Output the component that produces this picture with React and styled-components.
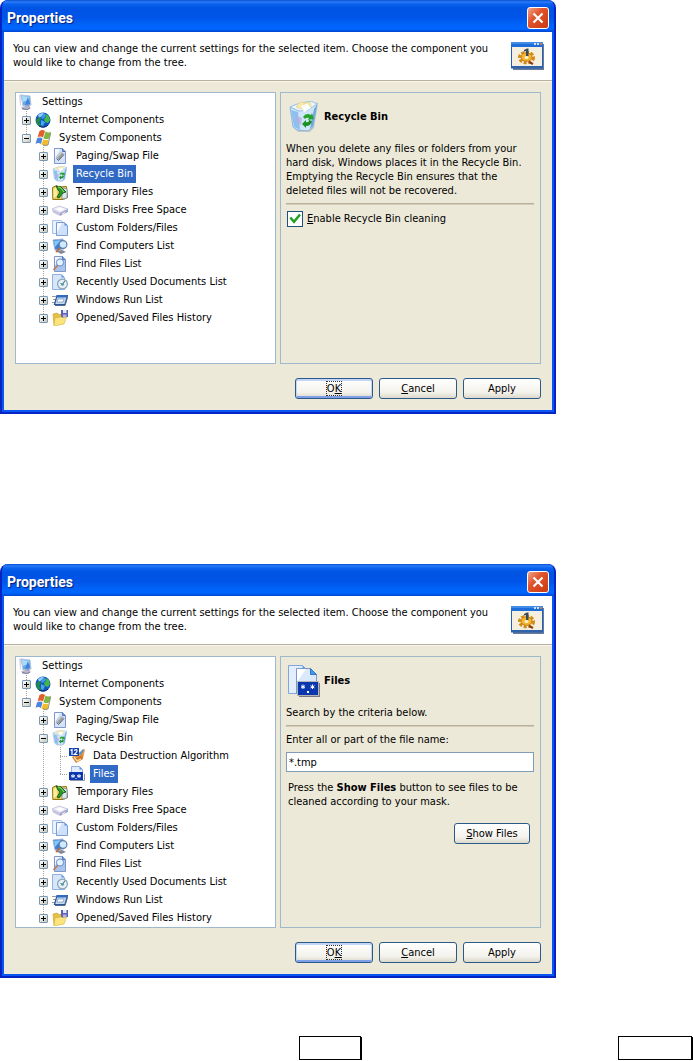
import React, { useState } from "react";
import styled, { createGlobalStyle } from "styled-components";

const GlobalStyle = createGlobalStyle`
  *, *::before, *::after { box-sizing: border-box; }
  body {
    margin: 0;
    background: #fff;
    color: #000;
    font: 11px/14px "DejaVu Sans Condensed", "DejaVu Sans", Tahoma, sans-serif;
  }
  button, input { font: inherit; color: inherit; margin: 0; }
  p, h1, h2, ul { margin: 0; padding: 0; }
  svg { display: block; flex-shrink: 0; }
`;

const Page = styled.main`
  display: flex;
  flex-direction: column;
  align-items: flex-start;
  gap: 150px;
`;

const Dialog = styled.section`
  width: 100%;
  max-width: 556px;
  padding: 0 2px 2px;
  border: 2px solid #0524c4;
  border-top: 0;
  border-radius: 8px 8px 0 0;
  background: #0b56f2;
  overflow: hidden;
`;

const Body = styled.div`
  background: #ece9d8;
`;

const TitleBar = styled.header`
  display: flex;
  align-items: center;
  justify-content: space-between;
  height: 32px;
  margin: 0 -2px;
  padding: 4px 5px 0;
  background: linear-gradient(
    #0a4fd0 0, #2a7cf8 2px, #0a62ee 4px, #0054e3 8px,
    #0055e8 18px, #0064fa 25px, #0066ff 29px, #0050e0 31px, #0044d0 32px
  );
`;

const Title = styled.h1`
  color: #fff;
  font: bold 14px/18px Roboto, "Open Sans", sans-serif;
  text-shadow: 1px 1px 1px #0a1f7a;
`;

const CloseButton = styled.button`
  display: grid;
  place-items: center;
  width: 22px;
  height: 22px;
  padding: 0;
  border: 1px solid #fff;
  border-radius: 3px;
  background: linear-gradient(135deg, #f0a58c, #e0532b 40%, #c93a12);
`;

const Intro = styled.div`
  display: flex;
  align-items: center;
  justify-content: space-between;
  gap: 12px;
  min-height: 48px;
  padding: 0 8px 0 9px;
  background: #fff;
`;

const Rule = styled.hr`
  height: 2px;
  margin: ${(p) => p.$space || "0"};
  border: 0;
  border-top: 1px solid #b8b09c;
  border-bottom: 1px solid ${(p) => (p.$space ? "#d2ccb9" : "#f8f6ee")};
`;

const Columns = styled.div`
  display: grid;
  grid-template-columns: 1fr 1fr;
  gap: 4px;
  padding: 10px 11px 0;
`;

const Box = styled.div`
  min-width: 0;
  min-height: 272px;
  border: 1px solid #9fb8ca;
`;

const TreeBox = styled(Box)`
  background: #fff;
  line-height: 18px;
`;

const Panel = styled(Box)`
  padding: 8px 6px 8px 5px;
`;

const dots = "#a5a293";

const Level = styled.ul`
  list-style: none;
  padding-left: ${(p) => (p.$nested ? "17px" : "0")};
`;

const Item = styled.li`
  background: repeating-linear-gradient(${dots} 0 1px, transparent 1px 2px)
    10px 0 / 1px ${(p) => (p.$last ? "9px" : "100%")} no-repeat;
`;

const Row = styled.div`
  display: flex;
  align-items: center;
  height: 18px;
  padding-left: ${(p) => (p.$root ? "2px" : "6px")};
  white-space: nowrap;
`;

const Toggle = styled.button`
  display: block;
  width: 9px;
  height: 9px;
  margin-right: 4px;
  padding: 0;
  border: 1px solid #7898b5;
  border-radius: 1px;
  background:
    linear-gradient(#000, #000) center / 5px 1px no-repeat,
    linear-gradient(#000, #000) center / 1px ${(p) => (p.$open ? "1px" : "5px")} no-repeat,
    linear-gradient(135deg, #fff, #cbc6b8);
`;

const Stub = styled.span`
  width: 13px;
  height: 18px;
  background: repeating-linear-gradient(90deg, ${dots} 0 1px, transparent 1px 2px)
    4px 9px / 7px 1px no-repeat;
`;

const Label = styled.span`
  margin-left: 5px;
  padding: 0 3px;
  color: ${(p) => (p.$selected ? "#fff" : "#000")};
  background: ${(p) => (p.$selected ? "#316ac5" : "transparent")};
`;

const Heading = styled.div`
  display: flex;
  align-items: center;
  gap: 4px;
  padding-left: 2px;
`;

const PanelTitle = styled.h2`
  font: inherit;
  font-weight: bold;
`;

const Description = styled.p`
  margin-top: 9px;
`;

const Hint = styled.p`
  margin: 9px 0 14px;
  padding-left: 2px;
`;

const CheckLabel = styled.label`
  display: flex;
  align-items: center;
  gap: 4px;
  padding-left: 1px;
`;

const Checkbox = styled.input`
  appearance: none;
  width: 16px;
  height: 16px;
  border: 1px solid #1c5180;
  background: #fff
    url("data:image/svg+xml,%3Csvg xmlns='http://www.w3.org/2000/svg' viewBox='0 0 14 14'%3E%3Cpath d='M2.300 5.500l3.700 4.300 6-7.300' fill='none' stroke='%2321a121' stroke-width='2.500'/%3E%3C/svg%3E")
    center / 14px 14px no-repeat;
  &:not(:checked) { background-image: none; }
`;

const FieldLabel = styled.label`
  display: block;
`;

const TextField = styled.input`
  display: block;
  width: 100%;
  height: 20px;
  margin-top: 5px;
  padding: 0 2px;
  border: 1px solid #7f9db9;
  background: #fff;
`;

const Button = styled.button`
  width: ${(p) => p.$width || "78px"};
  height: 21px;
  padding: 0;
  border: 1px solid #2a5a88;
  border-radius: 3px;
  background: linear-gradient(#fff, #f3f2ec 70%, #dcd8ca);
  box-shadow: ${(p) => (p.$primary ? "inset 0 1px 0 1px #c3d6f8, inset 0 -1px 0 1px #7f9fe8" : "none")};
`;

const FocusFrame = styled.span`
  outline: 1px dotted #333;
`;

const Actions = styled.div`
  display: flex;
  justify-content: flex-end;
  gap: 6px;
  padding: ${(p) => p.$pad};
`;

const Frames = styled.footer`
  display: flex;
  justify-content: space-between;
  width: 100%;
  margin-top: -92px;
  padding: 0 1px 0 299px;
`;

const Frame = styled.div`
  width: ${(p) => p.$width};
  height: 24px;
  border: 1px solid #000;
  box-shadow: 1px 1px 0 #000;
`;

const Svg = ({ size = 16, width, children }) => (
  <svg width={width || size} height={size} viewBox={`0 0 ${width || size} ${size}`} aria-hidden="true">
    {children}
  </svg>
);

const Computer = () => (
  <Svg>
    <path d="M1 1l2-1v11l-1 1z" fill="#d5d8ea" />
    <path d="M3 1l9 1 1 9-8 1z" fill="#6ba8e6" stroke="#b5c4df" />
    <path d="M4 2l7 .8.3 3L4.600 8z" fill="#a9dcfa" />
    <path d="M10 3l2 7-5 1z" fill="#3f83dc" />
    <path d="M7 12l4-1 1 3H6z" fill="#8386a8" />
    <path d="M3 13l7-1 3 2-3 2H5z" fill="#b9bad2" />
    <path d="M4 14.500l5 1 3-1.500" fill="none" stroke="#68698c" strokeWidth=".8" />
  </Svg>
);

const Globe = () => (
  <Svg>
    <circle cx="8" cy="8" r="7.500" fill="#1557c0" />
    <path d="M3 3a7 7 0 0 1 6-2L7 4 4 6z" fill="#8fd0fb" />
    <path d="M9 1l2 3-3 3-2-1z" fill="#3f98ee" />
    <path d="M1 8l3-3 2 1-1 3-1 1 2 3-1 2-3-3z" fill="#1f8f3f" />
    <path d="M10 2l4 2 1 4-2 3-3-1-1-3 2-2z" fill="#43b749" />
    <path d="M6 8l4 2-2 4-2-1z" fill="#49a8ec" />
    <path d="M13 13a7.500 7.500 0 0 1-9 1" fill="none" stroke="#0a2468" />
  </Svg>
);

const WindowsFlag = () => (
  <Svg>
    <path d="M4.500 1q3-2 5.500 0L8 7.500q-3-2-5.500 0z" fill="#e1602c" />
    <path d="M10.500 1.500q3 2 5.500 .3L14 8.500q-3 1.500-5.500-.3z" fill="#7eb843" />
    <path d="M2 8.500q3-2 5.500 0L6 14q-3-2-5.500 0z" fill="#4b86dc" />
    <path d="M8.200 9.200q3 1.800 5.500 0L12.500 15q-3 1.500-6-.5z" fill="#f2bd2c" />
    <path d="M15.700 3L13 15q-3 1-5 0" fill="none" stroke="#79776c" strokeWidth=".8" />
  </Svg>
);

const PageIcon = ({ children }) => (
  <Svg>
    <path d="M2.500 .5h8l3 3v12h-11z" fill="#d3e2f8" stroke="#8098c8" />
    <path d="M3 1h5L3 10z" fill="#f5f9ff" />
    <path d="M10.500 .5v3h3" fill="#6d9ae5" stroke="#5476b9" />
    {children}
  </Svg>
);

const Paging = () => (
  <PageIcon>
    <path d="M4 9l5-5 3 2-5 6z" fill="#9a9fa3" />
    <path d="M4 9l5-5 1 1-5 5z" fill="#c9cdcf" />
    <path d="M4.500 10.500l2 2 5.500-6" fill="none" stroke="#5e666b" />
  </PageIcon>
);

const BinShape = () => (
  <>
    <path d="M3 11l-1-7L8 2l14 0 7-1-4 25-4 4H9l-4-4z" fill="#8c9aa4" opacity=".4" transform="translate(1 1)" />
    <path d="M2 6l9 4 18-8-4 24-5 4-11-1-4-3z" fill="#cfe6f8" stroke="#8ab6de" />
    <path d="M2 6l7-3 14-3 6 3-9 6-9 1z" fill="#eaf5fd" stroke="#9bc4e6" />
    <path d="M8 6l4-5 5 1 5-1 1 5-6 3z" fill="#f8e9a8" stroke="#e0cc88" strokeWidth=".6" />
    <path d="M13 5l6-2 4 4-7 4z" fill="#fff" />
    <path d="M3 9l7 2 2 18-6-3z" fill="#8fbfee" />
    <path d="M26 8l3-4-4 21-3 3z" fill="#6fa8e2" />
    <path d="M8 15l6 2-1 7-3-1z" fill="#b9aae2" opacity=".75" />
    <path d="M15 16q3-5 8-2l1-2 2 6-6 1 1-2q-3-1-4 1z" fill="#27a22b" />
    <path d="M24 20q-1 5-6 5v2l-4-4 4-4v2q3 1 3-2z" fill="#189222" />
  </>
);

const Bin = () => (
  <svg width="16" height="16" viewBox="0 0 32 32" aria-hidden="true"><BinShape /></svg>
);

const BigBin = () => <Svg size={32}><BinShape /></Svg>;

const Temp = () => (
  <Svg>
    <path d="M.5 3.500l4-2 2 1.500 8-.5 1 11-4 2H.8z" fill="#e9c950" stroke="#8d7a1c" />
    <path d="M1.500 5l3-2 1 9-4 2z" fill="#fbeea2" />
    <path d="M10 4l5 1v9l-5 1z" fill="#dbe7f2" stroke="#65829f" strokeWidth=".6" />
    <path d="M4 2l5 1 5 5-3 1-4 5-2-1 3-5-2-2z" fill="#2a9a2c" stroke="#0d4f14" strokeWidth=".8" />
    <path d="M6 3l3 1 3 4" fill="none" stroke="#90e06c" />
  </Svg>
);

const Disk = () => (
  <Svg>
    <path d="M0 7l7-3 9 3-8 4z" fill="#eeeef8" stroke="#bcbcd8" strokeWidth=".8" />
    <path d="M0 7.500l8 3.500v3L1 10.500z" fill="#c4c3dd" />
    <path d="M8 11l8-4v3l-8 4z" fill="#a9a8ca" />
    <path d="M4 7l4-1.500L12 7 8 9z" fill="#fff" />
    <path d="M10 12l3-1.500" stroke="#faf9ff" />
  </Svg>
);

const Folders = () => (
  <Svg>
    <path d="M.5 .5h8l3 2v11H.5z" fill="#eaf2fe" stroke="#a5bfe8" />
    <path d="M4.500 2.500h8l3 3v10h-11z" fill="#cfe0fa" stroke="#7c9bd3" />
    <path d="M5 3h5L5 13z" fill="#f5f9ff" />
    <path d="M12.500 2.500v3h3z" fill="#5b93e4" />
  </Svg>
);

const FindComputer = () => (
  <Svg>
    <path d="M1 2l10-1 1 10-9 1z" fill="#3e7fd6" stroke="#9eb4d3" />
    <path d="M2 3l7-1-6 7z" fill="#7fc8f8" />
    <path d="M4 13l6-1 4 2-5 2z" fill="#84869c" />
    <circle cx="11" cy="6.500" r="3.900" fill="#cfeafa" stroke="#5f7fa6" strokeWidth="1.200" />
    <path d="M8 10l-4 4" stroke="#b56b42" strokeWidth="1.800" />
  </Svg>
);

const FindFiles = () => (
  <PageIcon>
    <path d="M3 9l10-6v12H3z" fill="#8eb0ea" opacity=".6" />
    <circle cx="8" cy="6.500" r="3.600" fill="#e3f3fd" stroke="#6a8bc0" />
    <path d="M5.500 9.500L1.500 14" stroke="#c07a58" strokeWidth="1.800" />
  </PageIcon>
);

const Recent = () => (
  <Svg>
    <path d="M.5 .5h9l3 3v12H.5z" fill="#d7e6fa" stroke="#93b2e2" />
    <path d="M9.500 .5v3h3z" fill="#5d94e4" />
    <circle cx="10.500" cy="10" r="4.900" fill="#e4f0f3" stroke="#86a6b8" strokeWidth="1.200" />
    <path d="M10.500 10.500L13 6.500M10.500 10.500l-2-1" stroke="#3b6a7e" />
    <circle cx="10.500" cy="10.500" r="1.300" fill="#4f94a5" />
  </Svg>
);

const RunWindow = () => (
  <Svg>
    <path d="M0 4.500h4M1 7.500h3M0 10.500h3" stroke="#9a9a9a" />
    <path d="M5 3.500h10.500L13 12.500H2.500z" fill="#c4d8f2" stroke="#2a5596" strokeWidth="1.200" />
    <path d="M5 3h10.500l-.8 2.500H4.300z" fill="#2f6cc0" />
    <path d="M6 7h6l-.8 3H5z" fill="#fff" stroke="#7192bd" strokeWidth=".7" />
    <path d="M3 13.500h10l2.500-8" fill="none" stroke="#536b8d" />
  </Svg>
);

const OpenSaved = () => (
  <Svg>
    <path d="M1 4l4-1 2 1.500 5-.5v9l-10 2z" fill="#e6c045" stroke="#c49a2c" strokeWidth=".6" />
    <path d="M3 8l12-2-3 8-10 2z" fill="#fae57c" stroke="#d9b13a" strokeWidth=".6" />
    <path d="M9 0h7v7l-6 .5-1-1z" fill="#5f60b4" />
    <path d="M11 0h3.500v3H11z" fill="#e6e8fa" />
    <path d="M11 4.500h3.500V7H11z" fill="#b4b5dc" />
  </Svg>
);

const Destroy = () => (
  <Svg>
    <path d="M3 9l9-5 3-3 1 1-2 8-6 4z" fill="#e5973c" />
    <path d="M10 5l4-4 1 1-3 5z" fill="#5a93cc" />
    <path d="M3 9l4 6 7-4-1-4-5 3z" fill="#cf7529" />
    <path d="M5 9l3 4 4-2" fill="none" stroke="#f9d48e" strokeWidth="1.500" />
    <rect width="10" height="8" fill="#1440b0" />
    <path d="M1.500 2.500l1.500-1V7M5 2.500q3-2 3 .5Q8 4 5.300 6.500H8.500" fill="none" stroke="#fff" strokeWidth="1.200" />
  </Svg>
);

const FilesIcon = () => (
  <Svg>
    <path d="M2.500 .5h8l3 3v6h-11z" fill="#e2edfc" stroke="#93b2e2" />
    <path d="M10.500 .5v3h3z" fill="#5d94e4" />
    <path d="M1 14.500h14.500V8" fill="none" stroke="#8c96ad" />
    <rect y="6" width="14" height="8" fill="#0c37ad" />
    <path d="M4 8v4M2 9.300l4 1.700M6 9.300L2 11M10 8v4M8 9.300l4 1.700M12 9.300L8 11" stroke="#fff" strokeWidth=".8" />
    <rect x="6.500" y="12" width="1" height="1" fill="#fff" />
  </Svg>
);

const BigFiles = () => (
  <Svg size={32}>
    <path d="M.5 .5h14l5 5v23H.5z" fill="#e3eefd" stroke="#85a4dc" />
    <path d="M14.500 .5v5h5z" fill="#4f9bea" />
    <path d="M8.500 3.500h14l6 6v19h-20z" fill="#dbe9fd" stroke="#7997d4" />
    <path d="M9 4h9L9 17z" fill="#fff" />
    <path d="M22.500 3.500l6 6h-6z" fill="#3f9aec" stroke="#3475c6" />
    <rect x="11" y="18" width="21" height="14" fill="#777a84" />
    <rect x="9.500" y="16.500" width="21" height="14" fill="#0b37ae" stroke="#b6b6ae" />
    <path d="M15 19.500v4.500M13 20.700l4 2.300M17 20.700l-4 2.300M24.500 19.500v4.500M22.500 20.700l4 2.300M26.500 20.700l-4 2.300" stroke="#fff" />
    <rect x="19" y="26" width="2" height="2" fill="#fff" />
  </Svg>
);

const SettingsWindow = () => (
  <Svg size={28} width={33}>
    <rect x="2" y="2" width="31" height="26" fill="#6a7b98" />
    <rect x=".5" y=".5" width="31" height="25.500" fill="#f4efdf" stroke="#2260b8" />
    <rect width="32" height="5" fill="#1d6ed8" />
    <path d="M0 1h32" stroke="#69aaf3" />
    <path d="M23 2h2M26 2h2" stroke="#fff" strokeWidth="1.500" />
    <path d="M29 2h2" stroke="#ef7b4b" strokeWidth="1.500" />
    <path d="M1 25h30" stroke="#3163a8" strokeWidth="2" />
    <ellipse cx="15.500" cy="15.500" rx="6.800" ry="5" fill="none" stroke="#d58a17" strokeWidth="3.500" strokeDasharray="3 1.500" />
    <ellipse cx="15.500" cy="15" rx="5.500" ry="4.300" fill="#f5b52c" stroke="#c98010" />
    <ellipse cx="15.500" cy="15.500" rx="2" ry="1.500" fill="#fff4d4" />
    <path d="M13 8l3-1.500h1.500V14H15V9l-2 .5z" fill="#394a58" />
    <path d="M18 20l4 2" stroke="#8b3b16" strokeWidth="2" />
  </Svg>
);

const components = [
  { name: "Paging/Swap File", icon: Paging },
  {
    name: "Recycle Bin",
    icon: Bin,
    children: [
      { name: "Data Destruction Algorithm", icon: Destroy, leaf: true },
      { name: "Files", icon: FilesIcon, leaf: true },
    ],
  },
  { name: "Temporary Files", icon: Temp },
  { name: "Hard Disks Free Space", icon: Disk },
  { name: "Custom Folders/Files", icon: Folders },
  { name: "Find Computers List", icon: FindComputer },
  { name: "Find Files List", icon: FindFiles },
  { name: "Recently Used Documents List", icon: Recent },
  { name: "Windows Run List", icon: RunWindow },
  { name: "Opened/Saved Files History", icon: OpenSaved },
];

const tree = [
  { name: "Internet Components", icon: Globe },
  { name: "System Components", icon: WindowsFlag, children: components },
];

function Node({ node, last, selected, expanded }) {
  const [open, setOpen] = useState(expanded.includes(node.name));
  const Icon = node.icon;
  return (
    <Item $last={last}>
      <Row>
        {node.leaf ? (
          <Stub />
        ) : (
          <Toggle
            type="button"
            $open={open}
            aria-expanded={open}
            aria-label={node.name}
            onClick={() => setOpen(!open)}
          />
        )}
        <Icon />
        <Label $selected={selected === node.name}>{node.name}</Label>
      </Row>
      {open && node.children && (
        <Level $nested>
          {node.children.map((child, i) => (
            <Node
              key={child.name}
              node={child}
              last={i === node.children.length - 1}
              selected={selected}
              expanded={expanded}
            />
          ))}
        </Level>
      )}
    </Item>
  );
}

function PropertiesDialog({ selected, expanded, children }) {
  return (
    <Dialog>
      <TitleBar>
        <Title>Properties</Title>
        <CloseButton type="button" aria-label="Close">
          <Svg size={14}>
            <path d="M2.500 2.500l9 9M11.500 2.500l-9 9" stroke="#fff" strokeWidth="2.200" />
          </Svg>
        </CloseButton>
      </TitleBar>
      <Body>
        <Intro>
          <p>
            You can view and change the current settings for the selected item. Choose the component
            you would like to change from the tree.
          </p>
          <SettingsWindow />
        </Intro>
        <Rule />
        <Columns>
          <TreeBox>
            <Row $root>
              <Computer />
              <Label>Settings</Label>
            </Row>
            <Level>
              {tree.map((node, i) => (
                <Node
                  key={node.name}
                  node={node}
                  last={i === tree.length - 1}
                  selected={selected}
                  expanded={expanded}
                />
              ))}
            </Level>
          </TreeBox>
          <Panel>{children}</Panel>
        </Columns>
        <Actions $pad="14px 11px 11px">
          <Button type="button" $primary>
            <FocusFrame>O<u>K</u></FocusFrame>
          </Button>
          <Button type="button"><u>C</u>ancel</Button>
          <Button type="button">Apply</Button>
        </Actions>
      </Body>
    </Dialog>
  );
}

export default function App() {
  return (
    <>
      <GlobalStyle />
      <Page>
        <PropertiesDialog selected="Recycle Bin" expanded={["System Components"]}>
          <Heading>
            <BigBin />
            <PanelTitle>Recycle Bin</PanelTitle>
          </Heading>
          <Description>
            When you delete any files or folders from your hard disk, Windows places it in the
            Recycle Bin. Emptying the Recycle Bin ensures that the deleted files will not be
            recovered.
          </Description>
          <Rule $space="5px 0 6px" />
          <CheckLabel>
            <Checkbox type="checkbox" defaultChecked />
            <span><u>E</u>nable Recycle Bin cleaning</span>
          </CheckLabel>
        </PropertiesDialog>
        <PropertiesDialog selected="Files" expanded={["System Components", "Recycle Bin"]}>
          <Heading>
            <BigFiles />
            <PanelTitle>Files</PanelTitle>
          </Heading>
          <Description>Search by the criteria below.</Description>
          <Rule $space="5px 0 6px" />
          <FieldLabel htmlFor="file-mask">Enter all or part of the file name:</FieldLabel>
          <TextField id="file-mask" type="text" defaultValue="*.tmp" />
          <Hint>
            Press the <b>Show Files</b> button to see files to be cleaned according to your mask.
          </Hint>
          <Actions $pad="0 4px 0 0">
            <Button type="button" $width="76px"><u>S</u>how Files</Button>
          </Actions>
        </PropertiesDialog>
        <Frames>
          <Frame $width="62px" />
          <Frame $width="74px" />
        </Frames>
      </Page>
    </>
  );
}
